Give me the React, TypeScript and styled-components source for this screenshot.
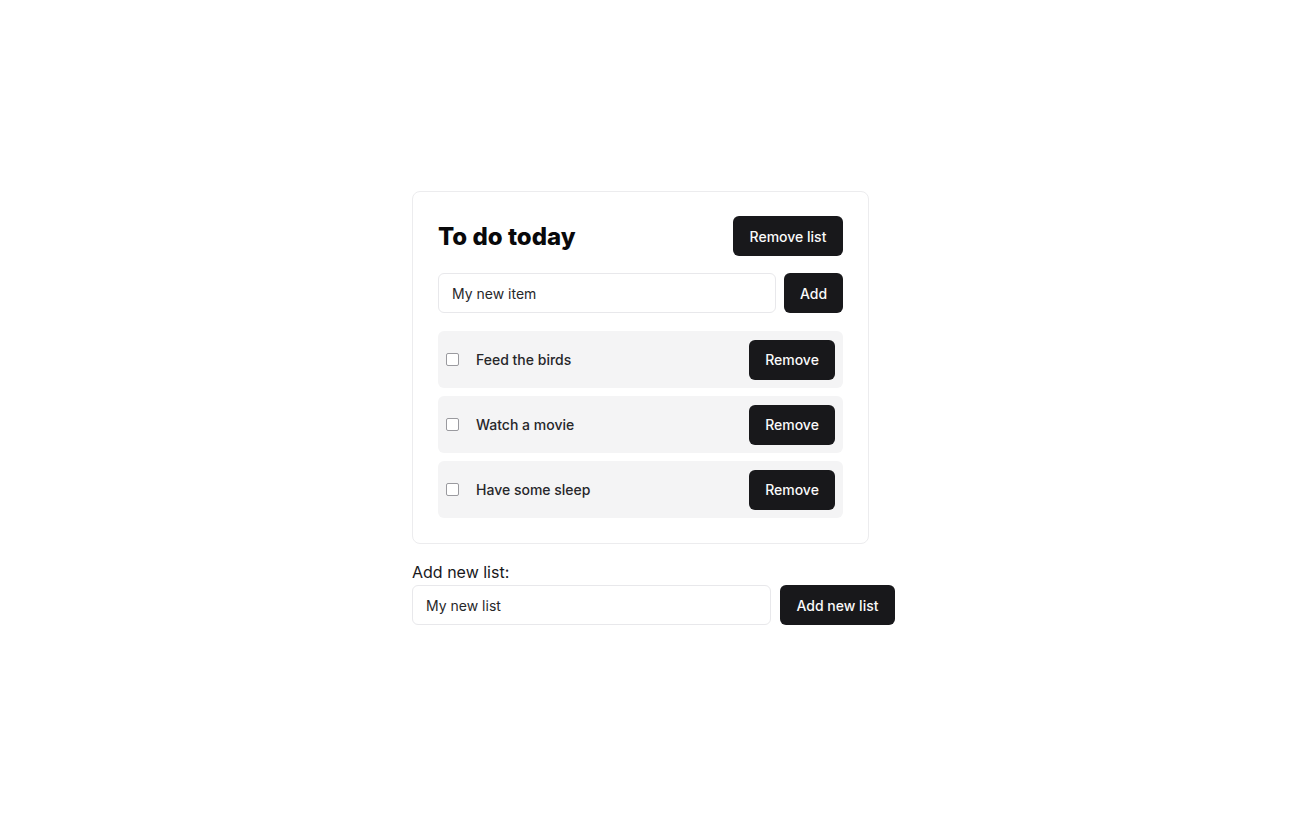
import React from "react";
import styled, { createGlobalStyle } from "styled-components";

const Global = createGlobalStyle`
  html, body { margin: 0; padding: 0; background: #ffffff; }
  body { font-family: Inter, "Noto Sans", sans-serif; color: #18181b; }
  * { box-sizing: border-box; }
`;

const Page = styled.div`
  min-height: 816px;
  display: flex;
  align-items: center;
  justify-content: center;
`;

const Wrap = styled.div`
  width: 484px;
  display: flex;
  flex-direction: column;
  align-items: flex-start;
`;

const Card = styled.section`
  width: 457px;
  border: 1px solid #ececee;
  border-radius: 8px;
  padding: 24px 25px 25px 25px;
  display: flex;
  flex-direction: column;
`;

const Header = styled.div`
  display: flex;
  align-items: center;
  justify-content: space-between;
  margin-bottom: 17px;
`;

const Title = styled.h2`
  margin: 0;
  font-size: 24px;
  font-weight: 800;
  letter-spacing: 0;
  color: #09090b;
`;

const Button = styled.button<{ $w?: number }>`
  height: 40px;
  padding: 0 16px;
  border: none;
  border-radius: 6px;
  background: #18181b;
  color: #fafafa;
  font-family: Inter, sans-serif;
  font-size: 14px;
  font-weight: 500;
  ${(p) => (p.$w ? `width: ${p.$w}px;` : "")}
  flex-shrink: 0;
`;

const InputRow = styled.div<{ $gap: number }>`
  display: flex;
  gap: ${(p) => p.$gap}px;
`;

const Input = styled.input<{ $w: number }>`
  width: ${(p) => p.$w}px;
  height: 40px;
  border: 1px solid #e8e8eb;
  border-radius: 6px;
  padding: 0 13px;
  font-family: Inter, sans-serif;
  font-size: 14px;
  color: #27272a;
  background: #fff;
  outline: none;
`;

const Items = styled.ul`
  list-style: none;
  margin: 18px 0 0 0;
  padding: 0;
  display: flex;
  flex-direction: column;
  gap: 8px;
`;

const Item = styled.li`
  display: flex;
  align-items: center;
  height: 57px;
  padding: 0 8px;
  background: #f4f4f5;
  border-radius: 6px;
`;

const Check = styled.span`
  width: 13px;
  height: 13px;
  border: 1px solid #9a9a9f;
  border-radius: 2px;
  background: #fff;
  flex-shrink: 0;
`;

const ItemText = styled.span`
  margin-left: 17px;
  flex: 1;
  font-size: 14px;
  font-weight: 500;
  color: #27272a;
`;

const NewList = styled.div`
  margin-top: 19px;
  display: flex;
  flex-direction: column;
  gap: 3px;
`;

const Label = styled.label`
  font-size: 16px;
  color: #18181b;
  line-height: 19px;
`;

const items = ["Feed the birds", "Watch a movie", "Have some sleep"];

export default function App() {
  return (
    <>
      <Global />
      <Page>
        <Wrap>
          <Card>
            <Header>
              <Title>To do today</Title>
              <Button $w={110}>Remove list</Button>
            </Header>
            <InputRow $gap={8}>
              <Input $w={338} defaultValue="My new item" />
              <Button $w={59}>Add</Button>
            </InputRow>
            <Items>
              {items.map((t) => (
                <Item key={t}>
                  <Check />
                  <ItemText>{t}</ItemText>
                  <Button $w={86}>Remove</Button>
                </Item>
              ))}
            </Items>
          </Card>
          <NewList>
            <Label>Add new list:</Label>
            <InputRow $gap={9}>
              <Input $w={359} defaultValue="My new list" />
              <Button $w={115}>Add new list</Button>
            </InputRow>
          </NewList>
        </Wrap>
      </Page>
    </>
  );
}
